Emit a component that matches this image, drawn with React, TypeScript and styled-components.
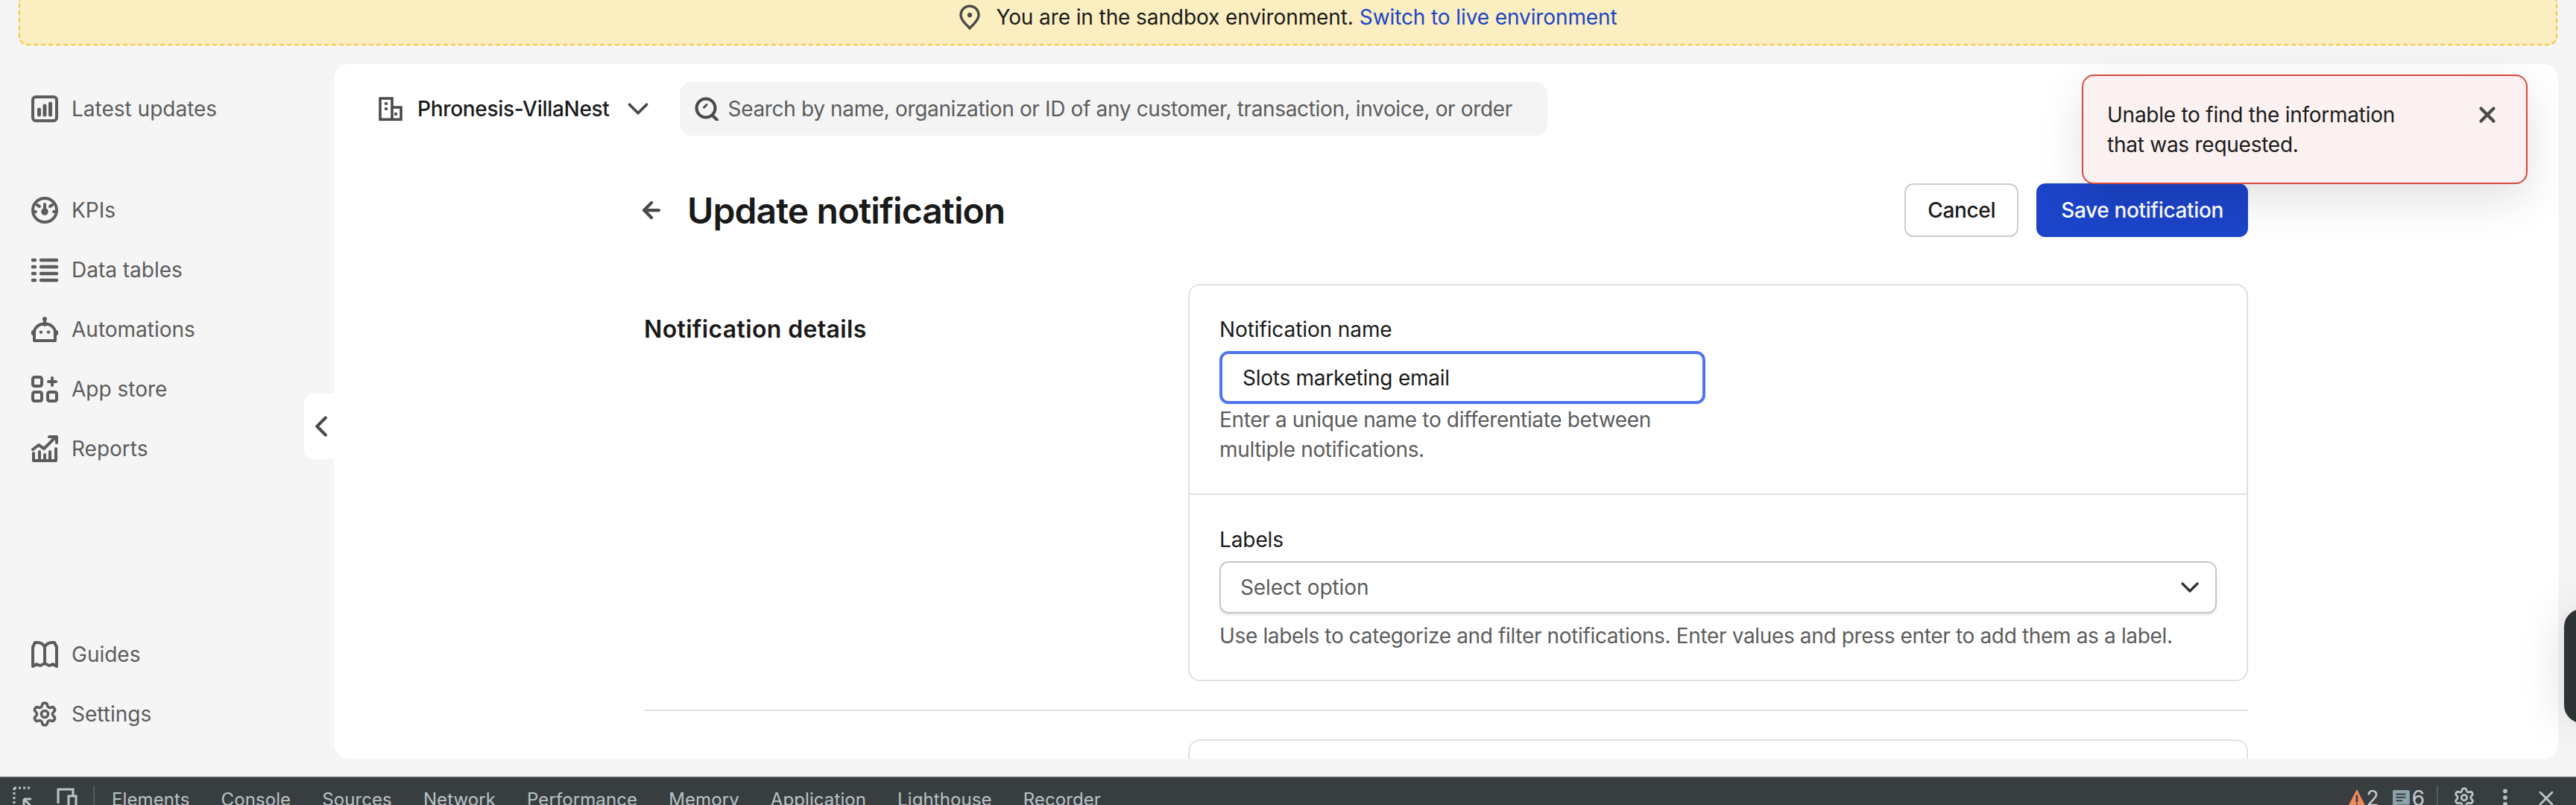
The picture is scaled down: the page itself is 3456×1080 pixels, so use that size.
import React from "react";
import styled, { createGlobalStyle } from "styled-components";
import { ChevronDown, ChevronLeft, ArrowLeft, X, Settings, MoreVertical } from "lucide-react";

const GlobalStyle = createGlobalStyle`
  html, body { margin: 0; padding: 0; height: 100%; }
  body {
    background: #f5f5f5;
    font-family: Inter, "Noto Sans", sans-serif;
    color: #1a1a1a;
    overflow: hidden;
  }
  #root { height: 100%; }
  * { box-sizing: border-box; }
`;

const Page = styled.div`
  position: relative;
  width: 3456px;
  height: 1080px;
  display: flex;
  flex-direction: column;
  overflow: hidden;
`;

const Banner = styled.div`
  height: 61px;
  margin: 0 25px;
  padding-bottom: 13px;
  background: #fbefc1;
  border: 2px dashed #f0c93c;
  border-top: none;
  border-radius: 0 0 12px 12px;
  display: flex;
  align-items: center;
  justify-content: center;
  gap: 20px;
  font-size: 28px;
  letter-spacing: -0.1px;
  color: #1a1a1a;
`;

const BannerLink = styled.a`
  color: #1c44c9;
  margin-left: 8px;
`;

const Main = styled.div`
  flex: 1;
  display: flex;
  min-height: 0;
  padding: 25px 24px 24px 0;
`;

const Sidebar = styled.nav`
  width: 448px;
  flex-shrink: 0;
  padding: 20px 0 20px 42px;
  display: flex;
  flex-direction: column;
  justify-content: space-between;
`;

const NavGroup = styled.div`
  display: flex;
  flex-direction: column;
`;

const NavItem = styled.a<{ $gapAfter?: boolean }>`
  height: 80px;
  margin-bottom: ${({ $gapAfter }) => ($gapAfter ? "56px" : "0")};
  display: flex;
  align-items: center;
  gap: 18px;
  font-size: 28px;
  color: #5c5c5c;
`;

const NavIcon = styled.svg`
  width: 36px;
  height: 36px;
  flex-shrink: 0;
  color: #5c5c5c;
`;

const CollapseTab = styled.button`
  position: absolute;
  left: 408px;
  top: 528px;
  width: 41px;
  height: 88px;
  padding: 0 0 0 5px;
  border: none;
  border-radius: 12px 0 0 12px;
  background: #fff;
  color: #4a4a4a;
  display: flex;
  align-items: center;
  justify-content: center;

  svg {
    flex-shrink: 0;
  }
`;

const Panel = styled.main`
  flex: 1;
  min-width: 0;
  background: #fff;
  border-radius: 20px;
  overflow: hidden;
`;

const TopBar = styled.header`
  height: 72px;
  margin-top: 24px;
  padding-left: 60px;
  display: flex;
  align-items: center;
`;

const OrgSwitch = styled.div`
  display: flex;
  align-items: center;
  font-size: 28px;
  font-weight: 500;
  letter-spacing: -0.3px;
  color: #1a1a1a;
  gap: 20px;

  svg:last-child {
    margin-left: -5px;
  }
`;

const OrgIcon = styled.svg`
  width: 32px;
  height: 32px;
  color: #4a4a4a;
`;

const SearchBar = styled.div`
  width: 1164px;
  height: 72px;
  margin-left: 33px;
  padding-left: 20px;
  background: #f4f4f4;
  border-radius: 16px;
  display: flex;
  align-items: center;
  gap: 13px;
  font-size: 28px;
  letter-spacing: -0.35px;
  color: #5c5c5c;
`;

const Content = styled.div`
  width: 2152px;
  margin-left: 416px;
`;

const TitleRow = styled.div`
  height: 72px;
  margin-top: 64px;
  display: flex;
  align-items: center;
`;

const BackButton = styled.span`
  width: 65px;
  margin-left: -7px;
  display: flex;
  color: #4a4a4a;
`;

const Title = styled.h1`
  flex: 1;
  margin: 0;
  font-size: 48px;
  font-weight: 600;
  letter-spacing: -0.9px;
  color: #1a1a1a;
`;

const Actions = styled.div`
  display: flex;
  gap: 24px;
`;

const Button = styled.button<{ $primary?: boolean }>`
  height: 72px;
  padding: 0 ${({ $primary }) => ($primary ? "33px" : "29px")};
  border-radius: 12px;
  border: ${({ $primary }) => ($primary ? "none" : "2px solid #cccccc")};
  background: ${({ $primary }) => ($primary ? "#1c44c9" : "#fff")};
  color: ${({ $primary }) => ($primary ? "#fff" : "#1a1a1a")};
  font-family: inherit;
  font-size: 28px;
  font-weight: 500;
  letter-spacing: -0.35px;
`;

const Section = styled.section`
  margin-top: 63px;
  display: flex;
  align-items: flex-start;
  padding-bottom: 38px;
  border-bottom: 2px solid #e0e0e0;
`;

const SectionTitle = styled.h2`
  width: 730px;
  margin: 41px 0 0;
  font-size: 32px;
  font-weight: 600;
  line-height: 40px;
  letter-spacing: 0.35px;
  color: #1a1a1a;
`;

const Card = styled.div`
  width: 1422px;
  border: 2px solid #e0e0e0;
  border-radius: 16px;
`;

const CardRow = styled.div<{ $last?: boolean }>`
  padding: ${({ $last }) => ($last ? "40px" : "39px")} 40px 0;
  height: ${({ $last }) => ($last ? "248px" : "281px")};
  border-bottom: ${({ $last }) => ($last ? "none" : "2px solid #e0e0e0")};
`;

const FieldLabel = styled.label`
  display: block;
  font-size: 28px;
  line-height: 40px;
  letter-spacing: -0.1px;
  color: #1a1a1a;
`;

const TextInput = styled.div`
  width: 652px;
  height: 71px;
  margin-top: 9px;
  padding-left: 27px;
  border: 4px solid #4f74ee;
  border-radius: 12px;
  display: flex;
  align-items: center;
  font-size: 28px;
  letter-spacing: -0.25px;
  color: #1a1a1a;
`;

const SelectBox = styled.div`
  height: 70px;
  margin-top: 9px;
  padding: 0 14px 0 26px;
  border: 2px solid #c8c8c8;
  border-radius: 12px;
  box-shadow: 0 2px 3px rgba(0, 0, 0, 0.1);
  display: flex;
  align-items: center;
  justify-content: space-between;
  font-size: 28px;
  letter-spacing: -0.1px;
  color: #5c5c5c;
`;

const HelpText = styled.p<{ $wide?: boolean }>`
  width: ${({ $wide }) => ($wide ? "auto" : "640px")};
  margin: ${({ $wide }) => ($wide ? "10px" : "1px")} 0 0;
  font-size: 28px;
  line-height: 40px;
  letter-spacing: -0.35px;
  color: #5c5c5c;
`;

const NextCard = styled.div`
  width: 1422px;
  height: 60px;
  margin: 38px 0 0 730px;
  border: 2px solid #e0e0e0;
  border-bottom: none;
  border-radius: 16px 16px 0 0;
`;

const Toast = styled.div`
  position: absolute;
  left: 2793px;
  top: 100px;
  width: 598px;
  height: 147px;
  padding: 32px 35px 0 32px;
  background: #fbf1f1;
  border: 2px solid #d9493f;
  border-radius: 16px;
  box-shadow: 0 20px 60px rgba(0, 0, 0, 0.12);
  display: flex;
  justify-content: space-between;
  font-size: 28px;
  line-height: 40px;
  letter-spacing: -0.25px;
  color: #1a1a1a;
`;

const ToastText = styled.div`
  width: 440px;
`;

const ToastClose = styled.span`
  display: flex;
  align-items: center;
  height: 40px;
  color: #4a4a4a;
`;

const DarkWidget = styled.div`
  position: absolute;
  left: 3440px;
  top: 817px;
  width: 40px;
  height: 153px;
  background: #2e3335;
  border-radius: 24px 0 0 24px;
  box-shadow: 0 0 60px rgba(0, 0, 0, 0.15);
`;

const DevTools = styled.footer`
  height: 38px;
  background: #383e40;
  border-top: 2px solid #4d5355;
  display: flex;
  align-items: flex-start;
  padding: 10px 24px 0 16px;
  color: #bdc4c7;
  font-size: 24px;
  overflow: hidden;
`;

const DevIcon = styled.svg<{ $ml?: number }>`
  width: 36px;
  height: 36px;
  margin-left: ${({ $ml }) => $ml ?? 0}px;
  flex-shrink: 0;
  color: #bdc4c7;
`;

const DevDivider = styled.span<{ $ml: number }>`
  width: 2px;
  height: 30px;
  margin-left: ${({ $ml }) => $ml}px;
  background: #555b5d;
`;

const DevTab = styled.span`
  margin-right: 42px;
  line-height: 30px;
  letter-spacing: 0.1px;
  color: #bac3c6;
`;

const DevTabs = styled.div`
  display: flex;
  flex: 1;
  margin-left: 23px;
  margin-top: 4px;
`;

const DevStatus = styled.div`
  display: flex;
  align-items: flex-start;
  font-size: 28px;
  line-height: 34px;
  margin-right: 16px;
  color: #c9cfd2;
`;

const WarningIcon = styled.svg`
  width: 26px;
  height: 26px;
  margin: 4px 0 0 0;
`;

const MessageIcon = styled.svg`
  width: 24px;
  height: 26px;
  margin: 5px 3px 0 17px;
`;

const DevAction = styled.span<{ $ml: number }>`
  display: flex;
  margin-left: ${({ $ml }) => $ml}px;
  margin-top: 1px;
  flex-shrink: 0;
  color: #bdc4c7;
`;

const tabs = ["Elements", "Console", "Sources", "Network", "Performance", "Memory", "Application", "Lighthouse", "Recorder"];

const strokeProps = { fill: "none", stroke: "currentColor", strokeWidth: 2, strokeLinecap: "round" as const, strokeLinejoin: "round" as const };

const App = () => {
  return (
    <Page>
      <GlobalStyle />
      <Banner>
        <svg width="30" height="34" viewBox="0 0 20 24" fill="none" stroke="#4a4a4a" strokeWidth="2.4">
          <path d="M10 22.5c-1-1.6-8.5-7-8.5-12.5a8.5 8.5 0 0 1 17 0c0 5.5-7.500 10.900-8.500 12.500z" />
          <circle cx="10" cy="10" r="2.200" fill="#4a4a4a" stroke="none" />
        </svg>
        <span>
          You are in the sandbox environment.<BannerLink>Switch to live environment</BannerLink>
        </span>
      </Banner>
      <Main>
        <Sidebar>
          <NavGroup>
            <NavItem $gapAfter>
              <NavIcon viewBox="0 0 18 18" {...strokeProps}>
                <rect x="1" y="1" width="16" height="16" rx="2" />
                <path d="M5.250 13v-3.500M9 13V7M12.750 13V5.500" strokeWidth="2.500" />
              </NavIcon>
              Latest updates
            </NavItem>
            <NavItem>
              <NavIcon viewBox="0 0 18 18" {...strokeProps}>
                <circle cx="9" cy="9" r="8" />
                <path d="M9 5v5M4 5.500l1.500 1M14 5.500l-1.500 1M1.500 10h1.500M15 10h1.500" />
                <circle cx="9" cy="10" r="1.400" fill="currentColor" />
              </NavIcon>
              KPIs
            </NavItem>
            <NavItem>
              <NavIcon viewBox="0 0 18 18" {...strokeProps}>
                <path d="M6.500 2.500H17M6.500 7H17M6.500 11.500H17M6.500 16H17M1 2.500h1.500M1 7h1.500M1 11.500h1.500M1 16h1.500" strokeWidth="2.200" />
              </NavIcon>
              Data tables
            </NavItem>
            <NavItem>
              <NavIcon viewBox="0 0 18 18" {...strokeProps}>
                <circle cx="9" cy="2" r="1.500" fill="currentColor" stroke="none" />
                <path d="M9 3v3M2 16.500V11a6 5 0 0 1 14 0v5.500zM1 10.500v1.500M17 10.500v1.500" />
                <path d="M6.500 10.800h.01M11.500 10.800h.01" strokeWidth="2.200" />
              </NavIcon>
              Automations
            </NavItem>
            <NavItem>
              <NavIcon viewBox="0 0 18 18" {...strokeProps}>
                <rect x="1" y="1" width="6" height="6" rx="1.200" />
                <rect x="1" y="11" width="6" height="6" rx="1.200" />
                <rect x="11" y="11" width="6" height="6" rx="1.200" />
                <path d="M14 1.500v5M11.500 4h5" />
              </NavIcon>
              App store
            </NavItem>
            <NavItem>
              <NavIcon viewBox="0 0 18 18" {...strokeProps}>
                <path d="M1 9.500l4-3 3.500 2.500 7-7M12 1h5v4" />
                <path d="M1.500 12v5h15v-8M5.500 17v-6M9 17v-4M12.500 17v-6" />
              </NavIcon>
              Reports
            </NavItem>
          </NavGroup>
          <NavGroup>
            <NavItem>
              <NavIcon viewBox="0 0 18 18" {...strokeProps}>
                <path d="M9 4c-1-2-3-3-5-3H2.500L1 4v13l2.500-1.500L6 16.500 9 15l3 1.500 2.500-1 2.500 1.500V4l-1.500-3H14c-2 0-4 1-5 3zM9 4v11" />
              </NavIcon>
              Guides
            </NavItem>
            <NavItem>
              <NavIcon viewBox="0 0 24 24" {...strokeProps} strokeWidth={2.4} as={Settings} />
              Settings
            </NavItem>
          </NavGroup>
        </Sidebar>
        <Panel>
          <TopBar>
            <OrgSwitch>
              <OrgIcon viewBox="0 0 16 16" fill="none" stroke="currentColor" strokeWidth="1.800">
                <path d="M1 15.100V1h8v14.100zM9 7h6v8.100H1" />
                <path d="M4 4.500h2M4 8h2" />
                <path d="M11.500 10.500v2" />
              </OrgIcon>
              Phronesis-VillaNest
              <ChevronDown size={46} strokeWidth={2} color="#4a4a4a" />
            </OrgSwitch>
            <SearchBar>
              <svg width="32" height="32" viewBox="0 0 32 32" fill="none" stroke="#4a4a4a" strokeWidth="4" strokeLinecap="round">
                <circle cx="15" cy="15" r="12.500" />
                <path d="M24 25l6 6" />
                <path d="M12.500 14l3.500-3.500" strokeWidth="3" />
              </svg>
              Search by name, organization or ID of any customer, transaction, invoice, or order
            </SearchBar>
          </TopBar>
          <Content>
            <TitleRow>
              <BackButton>
                <ArrowLeft size={34} strokeWidth={3} />
              </BackButton>
              <Title>Update notification</Title>
              <Actions>
                <Button>Cancel</Button>
                <Button $primary>Save notification</Button>
              </Actions>
            </TitleRow>
            <Section>
              <SectionTitle>Notification details</SectionTitle>
              <Card>
                <CardRow>
                  <FieldLabel>Notification name</FieldLabel>
                  <TextInput>Slots marketing email</TextInput>
                  <HelpText>Enter a unique name to differentiate between multiple notifications.</HelpText>
                </CardRow>
                <CardRow $last>
                  <FieldLabel>Labels</FieldLabel>
                  <SelectBox>
                    Select option
                    <ChevronDown size={40} strokeWidth={2} color="#333" />
                  </SelectBox>
                  <HelpText $wide>Use labels to categorize and filter notifications. Enter values and press enter to add them as a label.</HelpText>
                </CardRow>
              </Card>
            </Section>
            <NextCard />
          </Content>
        </Panel>
      </Main>
      <DevTools>
        <DevIcon viewBox="0 0 18 18" fill="none" stroke="currentColor" strokeWidth="1.500">
          <path d="M1.500 1.500h12M1.500 1.500v12" strokeDasharray="1.500 1.500" />
          <path d="M8 9l6 6M8 9v5M8 9h5" />
        </DevIcon>
        <DevIcon $ml={18} viewBox="0 0 18 18" fill="none" stroke="currentColor" strokeWidth="1.500">
          <path d="M4 12V2.500h10V7M1 15.500h10" />
          <rect x="11" y="7" width="5" height="9" />
        </DevIcon>
        <DevDivider $ml={19} />
        <DevTabs>
          {tabs.map((tab) => (
            <DevTab key={tab}>{tab}</DevTab>
          ))}
        </DevTabs>
        <DevStatus>
          <WarningIcon viewBox="0 0 24 24">
            <path d="M12 1L24 24H0z" fill="#f28b5c" />
            <path d="M12 8v9M12 19v2" stroke="#383e40" strokeWidth="2.500" />
          </WarningIcon>
          2
          <MessageIcon viewBox="0 0 22 24">
            <path d="M2 1h18a2 2 0 0 1 2 2v14a2 2 0 0 1-2 2H6l-5 4V3a2 2 0 0 1 1-2z" fill="#8ea3ab" />
            <path d="M5 6h12M5 10h12M5 14h8" stroke="#383e40" strokeWidth="1.800" />
          </MessageIcon>
          6
        </DevStatus>
        <DevDivider $ml={0} />
        <DevAction $ml={20}>
          <Settings size={30} strokeWidth={2.2} />
        </DevAction>
        <DevAction $ml={25}>
          <MoreVertical size={30} strokeWidth={2.6} />
        </DevAction>
        <DevAction $ml={24}>
          <X size={32} strokeWidth={2} />
        </DevAction>
      </DevTools>
      <CollapseTab>
        <ChevronLeft size={46} strokeWidth={2.2} />
      </CollapseTab>
      <Toast>
        <ToastText>Unable to find the information that was requested.</ToastText>
        <ToastClose>
          <X size={34} strokeWidth={3} />
        </ToastClose>
      </Toast>
      <DarkWidget />
    </Page>
  );
};

export default App;
